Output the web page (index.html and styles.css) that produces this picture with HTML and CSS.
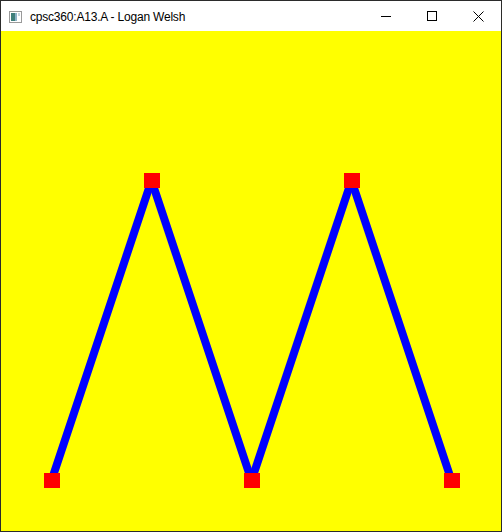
FILE: index.html
```html
<!DOCTYPE html>
<html>
<head>
<meta charset="utf-8">
<link rel="stylesheet" href="styles.css">
</head>
<body>
<div class="window">
  <div class="titlebar">
    <svg class="app-icon" width="13" height="12" viewBox="0 0 13 12">
      <rect x="0.5" y="0.5" width="12" height="11" fill="#fff" stroke="#9a9a9a"/>
      <rect x="2" y="2" width="4" height="8" fill="#3f7f7a"/>
      <rect x="6" y="2" width="2" height="8" fill="#8fb4c8"/>
      <rect x="9" y="2" width="2" height="3" fill="#c8d8e0"/>
    </svg>
    <span class="title">cpsc360:A13.A - Logan Welsh</span>
    <div class="controls">
      <div class="ctl">
        <svg width="10" height="10" viewBox="0 0 10 10"><line x1="0" y1="5.5" x2="10" y2="5.5" stroke="#000" stroke-width="1"/></svg>
      </div>
      <div class="ctl">
        <svg width="10" height="10" viewBox="0 0 10 10"><rect x="0.5" y="0.5" width="9" height="9" fill="none" stroke="#000" stroke-width="1"/></svg>
      </div>
      <div class="ctl">
        <svg width="11" height="11" viewBox="0 0 11 11"><path d="M0.5 0.5 L10.5 10.5 M10.5 0.5 L0.5 10.5" stroke="#000" stroke-width="1"/></svg>
      </div>
    </div>
  </div>
  <div class="canvas">
    <svg width="500" height="500" viewBox="0 0 500 500">
      <g stroke="#0000ff" stroke-width="8" stroke-linecap="butt">
        <line x1="50.5" y1="449.5" x2="150.5" y2="149.5"/>
        <line x1="150.5" y1="149.5" x2="250.5" y2="449.5"/>
        <line x1="250.5" y1="449.5" x2="350.5" y2="149.5"/>
        <line x1="350.5" y1="149.5" x2="450.5" y2="449.5"/>
      </g>
      <rect x="143" y="142" width="16" height="15" fill="#ff0000"/>
      <rect x="343" y="142" width="16" height="15" fill="#ff0000"/>
      <rect x="43" y="442" width="16" height="15" fill="#ff0000"/>
      <rect x="243" y="442" width="16" height="15" fill="#ff0000"/>
      <rect x="443" y="442" width="16" height="15" fill="#ff0000"/>
    </svg>
  </div>
</div>
</body>
</html>
```
FILE: styles.css
```css
html, body {
  margin: 0;
  padding: 0;
  background: #ffffff;
}
.window {
  width: 500px;
  height: 530px;
  border: 1px solid #2b2b2b;
  display: flex;
  flex-direction: column;
}
.titlebar {
  height: 30px;
  background: #ffffff;
  display: flex;
  align-items: center;
  flex-shrink: 0;
}
.app-icon {
  margin-left: 8px;
  margin-right: 8px;
  margin-top: 1px;
}
.title {
  font-family: "Liberation Sans", Arial, sans-serif;
  font-size: 12px;
  letter-spacing: -0.2px;
  color: #000;
  margin-top: 1px;
}
.controls {
  margin-left: auto;
  display: flex;
  height: 30px;
}
.ctl {
  width: 46px;
  height: 30px;
  display: flex;
  align-items: center;
  justify-content: center;
}
.canvas {
  width: 500px;
  height: 500px;
  background: #ffff00;
}
.canvas svg {
  display: block;
}
```
